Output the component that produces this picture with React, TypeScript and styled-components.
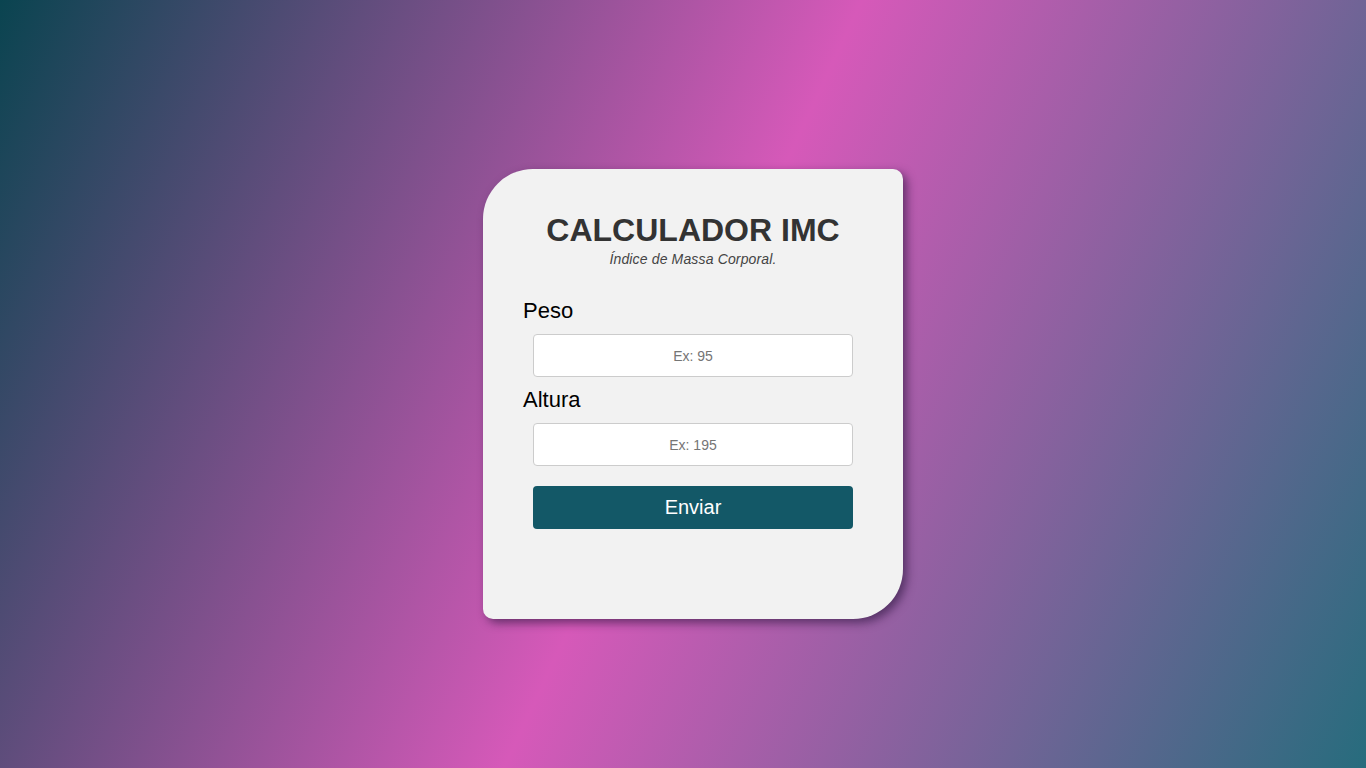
import React from "react";
import styled, { createGlobalStyle } from "styled-components";

const Global = createGlobalStyle`
  html, body { margin: 0; padding: 0; height: 100%; }
  body {
    font-family: "Liberation Sans", Arial, sans-serif;
    background: linear-gradient(115deg, #0a4450 0%, #d659b9 50%, #276c7d 100%);
    background-attachment: fixed;
  }
  #root { min-height: 100vh; }
`;

const Page = styled.main`
  min-height: 100vh;
  box-sizing: border-box;
  padding: 20px 0 0 20px;
  display: flex;
  align-items: center;
  justify-content: center;
`;

const Card = styled.section`
  width: 420px;
  height: 450px;
  box-sizing: border-box;
  background: #f2f2f2;
  border-radius: 50px 10px 50px 10px;
  box-shadow: 4px 4px 10px rgba(40, 20, 60, 0.6);
  padding: 43px 40px 0 40px;
  display: flex;
  flex-direction: column;
`;

const Header = styled.header`
  text-align: center;
  margin-bottom: 31px;
`;

const Title = styled.h1`
  margin: 0;
  font-size: 32px;
  line-height: 37px;
  font-weight: 700;
  color: #333333;
`;

const Subtitle = styled.p`
  margin: 2px 0 0;
  font-size: 14px;
  line-height: 16px;
  font-style: italic;
  letter-spacing: 0.15px;
  color: #444444;
`;

const Form = styled.form`
  display: flex;
  flex-direction: column;
`;

const Label = styled.label`
  font-size: 22px;
  line-height: 25px;
  color: #000;
  margin-bottom: 11px;
`;

const Input = styled.input`
  width: 320px;
  height: 43px;
  box-sizing: border-box;
  margin: 0 0 10px 10px;
  border: 1px solid #cccccc;
  border-radius: 4px;
  background: #fff;
  text-align: center;
  font-family: "Liberation Sans", Arial, sans-serif;
  font-size: 14px;
  &::placeholder { color: #757575; }
`;

const Button = styled.button`
  width: 320px;
  height: 43px;
  margin: 10px 0 0 10px;
  border: none;
  border-radius: 4px;
  background: #135867;
  color: #fff;
  font-family: "Liberation Sans", Arial, sans-serif;
  font-size: 20px;
  cursor: pointer;
`;

export default function App() {
  return (
    <>
      <Global />
      <Page>
        <Card>
          <Header>
            <Title>CALCULADOR IMC</Title>
            <Subtitle>Índice de Massa Corporal.</Subtitle>
          </Header>
          <Form onSubmit={(e) => e.preventDefault()}>
            <Label htmlFor="peso">Peso</Label>
            <Input id="peso" type="text" placeholder="Ex: 95" />
            <Label htmlFor="altura">Altura</Label>
            <Input id="altura" type="text" placeholder="Ex: 195" />
            <Button type="submit">Enviar</Button>
          </Form>
        </Card>
      </Page>
    </>
  );
}
